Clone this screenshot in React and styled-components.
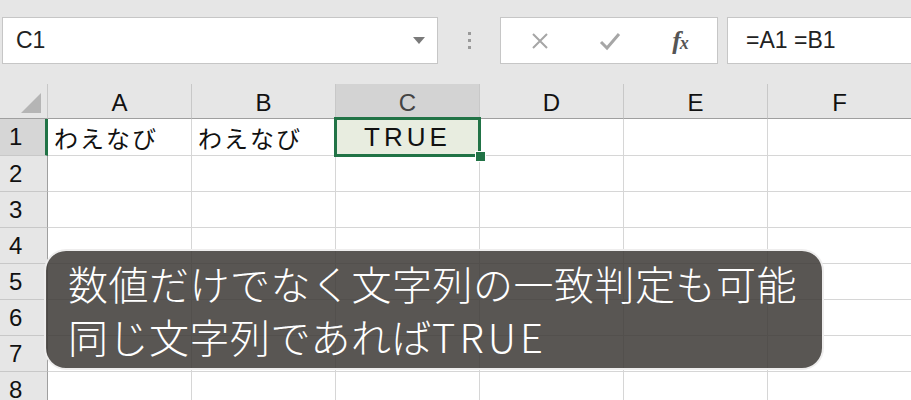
import styled, { createGlobalStyle } from "styled-components";

const GlobalStyle = createGlobalStyle`
  html, body {
    margin: 0;
    padding: 0;
  }
  body {
    background: #ffffff;
    font-family: "Liberation Sans", "Noto Sans CJK JP", sans-serif;
    overflow: hidden;
  }
`;

const COLUMNS = ["A", "B", "C", "D", "E", "F"];
const ROWS = [1, 2, 3, 4, 5, 6, 7, 8];
const DATA = {
  A1: "わえなび",
  B1: "わえなび",
  C1: "TRUE",
};
const ACTIVE = { col: "C", row: 1 };

const Page = styled.div`
  height: 400px;
  overflow: hidden;
  display: flex;
  flex-direction: column;
`;

const FormulaBar = styled.div`
  height: 84px;
  flex: none;
  display: flex;
  align-items: flex-start;
  padding-top: 17px;
  box-sizing: border-box;
  background: #e6e6e6;
`;

const Field = styled.div`
  height: 47px;
  box-sizing: border-box;
  background: #ffffff;
  border: 1px solid #c6c6c6;
  display: flex;
  align-items: center;
  font-size: 23px;
  color: #222;
`;

const NameBox = styled(Field)`
  margin-left: 2px;
  width: 436px;
  justify-content: space-between;
  padding: 0 12px 0 13px;
`;

const DropArrow = styled.span`
  width: 0;
  height: 0;
  border-left: 6px solid transparent;
  border-right: 6px solid transparent;
  border-top: 7px solid #7a7a7a;
`;

const Grip = styled.div`
  width: 62px;
  height: 47px;
  display: flex;
  flex-direction: column;
  align-items: center;
  justify-content: center;
  gap: 4px;

  span {
    width: 3px;
    height: 3px;
    background: #9a9a9a;
  }
`;

const ButtonBox = styled(Field)`
  width: 218px;
  padding: 0 4px;
  display: grid;
  grid-template-columns: repeat(3, 70px);
  align-items: center;
  justify-items: center;
`;

const FxLabel = styled.span`
  font-family: "Liberation Serif", "DejaVu Serif", serif;
  font-style: italic;
  font-weight: bold;
  font-size: 26px;
  color: #555;
  letter-spacing: -1px;
  line-height: 1;

  small {
    font-size: 18px;
  }
`;

const FormulaInput = styled(Field)`
  flex: 1;
  margin-left: 9px;
  padding-left: 18px;
  border-right: none;
`;

const Sheet = styled.div`
  position: relative;
  flex: 1;
  display: grid;
  grid-template-columns: 48px repeat(6, 144px);
  grid-template-rows: 35px 37px repeat(6, 36px) 36px;
  background: #ffffff;
`;

const Corner = styled.div`
  background: #e6e6e6;
  border-right: 1px solid #c8c8c8;
  border-bottom: 1px solid #9f9f9f;
  box-sizing: border-box;
  display: flex;
  align-items: flex-end;
  justify-content: flex-end;
  padding: 0 6px 5px 0;

  &::after {
    content: "";
    width: 0;
    height: 0;
    border-left: 20px solid transparent;
    border-bottom: 20px solid #b5b5b5;
  }
`;

const ColHeader = styled.div`
  background: ${(p) => (p.$selected ? "#d3d3d3" : "#e6e6e6")};
  color: ${(p) => (p.$selected ? "#444" : "#111")};
  border-right: 1px solid #c8c8c8;
  border-bottom: 1px solid #9f9f9f;
  box-sizing: border-box;
  display: flex;
  align-items: center;
  justify-content: center;
  font-size: 24px;
  padding-top: 4px;
`;

const RowHeader = styled.div`
  background: ${(p) => (p.$selected ? "#d6d6d6" : "#e6e6e6")};
  border-right: ${(p) => (p.$selected ? "3px solid #217346" : "1px solid #9f9f9f")};
  border-bottom: 1px solid #c8c8c8;
  box-sizing: border-box;
  display: flex;
  align-items: center;
  padding-left: 9px;
  font-size: 24px;
  color: #111;
`;

const Cell = styled.div`
  position: relative;
  border-right: 1px solid #d6d6d6;
  border-bottom: 1px solid #d6d6d6;
  box-sizing: border-box;
  display: flex;
  align-items: center;
  justify-content: ${(p) => (p.$center ? "center" : "flex-start")};
  padding-left: ${(p) => (p.$center ? "0" : "6px")};
  font-family: ${(p) =>
    p.$center
      ? `"Liberation Sans", sans-serif`
      : `"Noto Sans CJK JP", "Liberation Sans", sans-serif`};
  font-size: ${(p) => (p.$center ? "26px" : "24px")};
  letter-spacing: ${(p) => (p.$center ? "4px" : "2px")};
  color: #111;
  background: ${(p) => (p.$active ? "#e8ede0" : "transparent")};
  z-index: ${(p) => (p.$active ? 2 : "auto")};

  ${(p) =>
    p.$active &&
    `
    &::after {
      content: "";
      position: absolute;
      inset: -2px -2px -2px -2px;
      border: 3px solid #217346;
    }
    &::before {
      content: "";
      position: absolute;
      right: -7px;
      bottom: -7px;
      width: 9px;
      height: 9px;
      background: #217346;
      border: 1px solid #ffffff;
      z-index: 3;
    }
  `}
`;

const Caption = styled.div`
  position: absolute;
  left: 44px;
  top: 165px;
  width: 780px;
  height: 121px;
  box-sizing: border-box;
  padding: 6px 0 0 22px;
  border: 2px solid rgba(255, 255, 255, 0.9);
  border-radius: 22px;
  background: rgba(60, 56, 53, 0.85);
  color: #ffffff;
  font-family: "Noto Sans CJK JP", sans-serif;
  font-weight: 300;
  font-size: 40px;
  line-height: 53px;
  letter-spacing: 0.5px;
  z-index: 5;
`;

const Latin = styled.span`
  letter-spacing: 4px;
`;

function CrossIcon() {
  return (
    <svg width="20" height="20" viewBox="0 0 20 20">
      <path d="M3 3 L17 17 M17 3 L3 17" stroke="#a6a6a6" strokeWidth="2" fill="none" />
    </svg>
  );
}

function CheckIcon() {
  return (
    <svg width="22" height="20" viewBox="0 0 22 20">
      <path d="M2 11 L8 17 L20 3" stroke="#a6a6a6" strokeWidth="3" fill="none" />
    </svg>
  );
}

export default function App() {
  return (
    <Page>
      <GlobalStyle />
      <FormulaBar>
        <NameBox>
          <span>C1</span>
          <DropArrow />
        </NameBox>
        <Grip>
          <span />
          <span />
          <span />
        </Grip>
        <ButtonBox>
          <CrossIcon />
          <CheckIcon />
          <FxLabel>
            f<small>x</small>
          </FxLabel>
        </ButtonBox>
        <FormulaInput>=A1 =B1</FormulaInput>
      </FormulaBar>

      <Sheet>
        <Corner />
        {COLUMNS.map((c) => (
          <ColHeader key={c} $selected={c === ACTIVE.col}>
            {c}
          </ColHeader>
        ))}
        {ROWS.map((r) => [
          <RowHeader key={`h${r}`} $selected={r === ACTIVE.row}>
            {r}
          </RowHeader>,
          ...COLUMNS.map((c) => {
            const ref = `${c}${r}`;
            const active = c === ACTIVE.col && r === ACTIVE.row;
            return (
              <Cell key={ref} $active={active} $center={active}>
                {DATA[ref]}
              </Cell>
            );
          }),
        ])}
        <Caption>
          数値だけでなく文字列の一致判定も可能
          <br />
          同じ文字列であれば<Latin>TRUE</Latin>
        </Caption>
      </Sheet>
    </Page>
  );
}
